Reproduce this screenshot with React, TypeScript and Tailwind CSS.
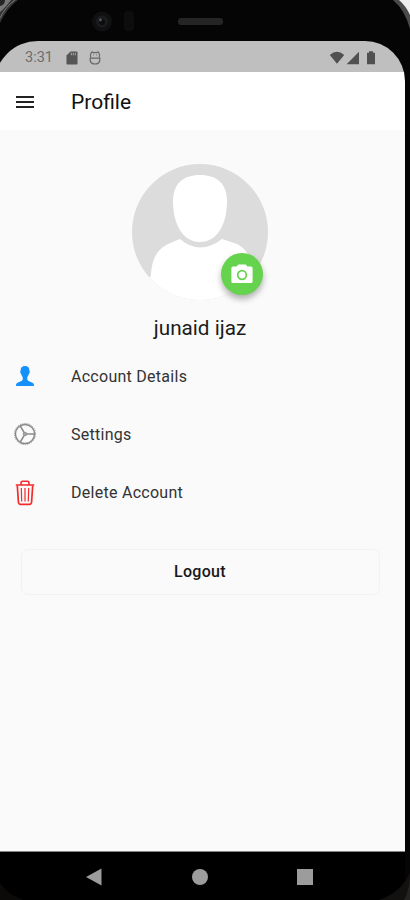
import React from 'react';

interface MenuItem {
  label: string;
  icon: React.ReactNode;
}

const PersonIcon: React.FC = () => (
  <svg className="mb-[2px] h-6 w-6" viewBox="0 0 24 24" fill="#1491fb">
    <path d="M12 2C9 2 7.400 3.800 7.600 7c-.6.200-.4 1.700.1 2.400.2.200.4.300.5.600.3 1.500.9 2.300 1.500 3.200v2.600c-.5 1.500-3.900 2.100-5.600 3.100C3.200 19.500 3 20.500 3 22h18c0-1.500-.2-2.500-1.100-3.100-1.700-1-5.100-1.600-5.600-3.100v-2.600c.6-.9 1.200-1.700 1.500-3.200.1-.3.300-.4.500-.6.500-.7.700-2.200.1-2.400C16.600 3.800 15 2 12 2z" />
  </svg>
);

const WheelIcon: React.FC = () => (
  <svg className="mb-[2px] h-6 w-6" viewBox="0 0 24 24" fill="none" stroke="#8a8a8a">
    <circle cx="12" cy="12" r="10.600" strokeWidth=".8" strokeDasharray="1.200 1.020" />
    <circle cx="12" cy="12" r="9.600" strokeWidth="1.500" />
    <circle cx="12" cy="12" r="1.800" fill="#a5a5a5" strokeWidth=".8" />
    <path d="M13.600 12h7.400M11.200 10.700 7.300 4M11.200 13.300 7.300 20" strokeWidth="1.500" />
  </svg>
);

const TrashIcon: React.FC = () => (
  <svg className="h-[26px] w-6" viewBox="0 0 24 26" fill="none" stroke="#f52a2a" strokeWidth="1.200">
    <path d="M2.800 5h18.400M8 4.500V2.900Q8 1.300 9.600 1.300h4.800Q16 1.300 16 2.900v1.600" strokeWidth="1.600" />
    <path d="M4.300 5.500l1.100 16.500Q5.600 24.300 7.600 24.300h8.800q2 0 2.200-2.300L19.700 5.500" strokeWidth="1.700" />
    <path d="M8.300 8l.4 13.500M12 8v13.500M15.700 8l-.4 13.500" />
  </svg>
);

const menuItems: MenuItem[] = [
  { label: 'Account Details', icon: <PersonIcon /> },
  { label: 'Settings', icon: <WheelIcon /> },
  { label: 'Delete Account', icon: <TrashIcon /> },
];

const Bezel: React.FC = () => (
  <svg className="absolute left-0 top-0 h-[900px] w-[410px]" viewBox="0 0 410 900" fill="none">
    <path d="M0 0h18Q7 8 0 23z" fill="#343434" />
    <path d="M0 0h11Q5 8 0 12z" fill="#777777" />
    <path d="M0 0h5Q5 5 0 6z" fill="#252525" />
    <path d="M15 0Q6 6 0 18" stroke="#777777" strokeWidth="1" />
    <path d="M393 0h17v29Q405 10 393 0z" fill="#4a4a4a" />
    <path d="M399 0h11v15Q406 6 399 0z" fill="#eeeeee" />
    <circle cx="102" cy="21.500" r="10" fill="#101011" />
    <circle cx="102" cy="21.500" r="6" fill="#1b1c1f" />
    <circle cx="102" cy="22" r="3" fill="#0c0d0f" />
    <circle cx="100.500" cy="20" r="1.400" fill="#55575b" />
    <rect x="124" y="11" width="10" height="20" rx="4" fill="#0d0d0e" />
    <rect x="178" y="18" width="45" height="7" rx="3" fill="#252526" />
  </svg>
);

const StatusBar: React.FC = () => (
  <div className="flex h-[31px] items-center bg-[#bfbfbf] pl-[31px] pr-[29px] pt-[2px] text-[#555555]">
    <span className="w-[41px] pt-[2px] text-[14.500px] leading-none text-[#6c6c6c]">3:31</span>
    <svg className="h-[14px] w-[12px]" viewBox="0 0 12 14">
      <path d="M4.500.5h6q1 0 1 1v11q0 1-1 1h-9q-1 0-1-1V4.500z" fill="#555555" />
      <path d="M5.300 1.800v2.500M7.300 1.800v2.500M9.300 1.800v2.500" stroke="#a6a6a6" />
    </svg>
    <svg className="ml-[11px] h-[14px] w-[12px]" viewBox="0 0 12 14" fill="none" stroke="#686868" strokeWidth="1.200">
      <path d="M1.700 6.200Q1 4 2 2.300L3 .9l1.500.8h3L9 .9l1 1.400Q11 4 10.300 6.200M1.200 7.200h9.600v2.200q-.3 3.600-4.800 3.600T1.200 9.400z" />
      <path d="M4 4h.8M7.200 4H8" />
    </svg>
    <svg className="ml-auto h-[14px] w-[47px]" viewBox="0 0 47 14" fill="#505050">
      <path d="M.8 4Q8-2.300 15.200 4L8 12.800z" />
      <path d="M30 .8V13.200H17.600z" />
      <path d="M38 1.800h2V.3h4v1.500h2v11.500h-8z" />
    </svg>
  </div>
);

const NavigationBar: React.FC = () => (
  <div className="flex h-[48px] items-center bg-black pl-[92px] pt-[1px]">
    <svg className="h-[18px] w-[16px]" viewBox="0 0 16 18" fill="#9c9c9c">
      <path d="M0 9 15.500.5v17z" />
    </svg>
    <div className="ml-[90px] h-4 w-4 rounded-full bg-[#9c9c9c]" />
    <div className="ml-[89px] h-4 w-4 bg-[#9c9c9c]" />
  </div>
);

// Lower corners of the phone frame, drawn over the navigation bar
const BezelCorners: React.FC = () => (
  <svg className="pointer-events-none absolute bottom-0 left-0 h-[30px] w-[410px]" viewBox="0 870 410 30">
    <path d="M0 883q9 13 24 17H0z" fill="#0c0909" />
    <path d="M410 872q-8 20-31 28h31z" fill="#131010" />
    <path d="M410 878q-1 13-6 22h6z" fill="#252222" />
  </svg>
);

const ProfilePhoto: React.FC = () => (
  <div className="relative mx-auto h-[136px] w-[136px]">
    <svg className="h-full w-full rounded-full" viewBox="0 0 136 136">
      <rect width="136" height="136" fill="#dcdcdc" />
      <path d="M68 11c-17 0-27 9-27 26 0 22 9 41 27 41s27-19 27-41c0-17-10-26-27-26z" fill="#ffffff" />
      <path d="M48 75q20 17 42 0l15 5q10 5 14 17l9 39H12l7-26q1-19 12-27 4-3 17-8z" fill="#ffffff" />
    </svg>
    <button className="absolute left-[89px] top-[89px] flex h-[42px] w-[42px] items-center justify-center rounded-full bg-[#66d34f] shadow-[0_4px_6px_#0000004d]">
      <svg className="h-[20px] w-[22px]" viewBox="0 0 22 20">
        <path d="M7.300.500h7.400l1.700 2H20q1.600 0 1.600 1.600v13.600q0 1.300-1.600 1.300H2Q.4 19 .4 17.700V4.100Q.4 2.500 2 2.500h3.600z" fill="#ffffff" />
        <circle cx="11" cy="11" r="4.300" fill="none" stroke="#66d34f" strokeWidth="1.700" />
      </svg>
    </button>
  </div>
);

export default function App() {
  return (
    <div className="relative flex h-[900px] w-[410px] flex-col overflow-hidden bg-[#050506] font-['Roboto',sans-serif]">
      <Bezel />
      <div className="relative -ml-[6px] mt-[41px] flex h-[859px] w-[411px] flex-col">
        <div className="overflow-hidden rounded-tl-[44px] rounded-tr-[40px]">
          <StatusBar />

          {/* Header */}
          <header className="flex h-[58px] items-center bg-white pl-[22px] pt-[2px]">
            <button aria-label="Open menu" className="flex w-[18px] flex-col gap-[3px]">
              <span className="h-[2px] bg-[#222222]" />
              <span className="h-[2px] bg-[#222222]" />
              <span className="h-[2px] bg-[#222222]" />
            </button>
            <h1 className="ml-[37px] pt-[2px] text-[21px] font-normal text-[#111111]">Profile</h1>
          </header>
        </div>

        {/* Profile */}
        <main className="flex h-[722px] flex-col border-b border-[#858585] bg-[#fafafa] pl-[6px] pt-[34px]">
          <div className="w-[400px]">
            <ProfilePhoto />
            <h2 className="mt-[13px] text-center text-[20.700px] leading-[30px] text-[#1c1c1c]">junaid ijaz</h2>
          </div>

          <ul className="mt-[5px]">
            {menuItems.map((item) => (
              <li key={item.label} className="flex h-[58px] items-center pl-[13px]">
                {item.icon}
                <span className="ml-[34px] text-[16px] tracking-[0.270px] text-[#333333]">{item.label}</span>
              </li>
            ))}
          </ul>

          <button className="ml-[21px] mt-[27px] h-[46px] w-[359px] rounded-[7px] border border-[#f2f2f2] pr-[1px] text-[16px] font-medium tracking-[0.300px] text-[#181818]">
            Logout
          </button>
        </main>

        <NavigationBar />
      </div>
      <BezelCorners />
    </div>
  );
}
